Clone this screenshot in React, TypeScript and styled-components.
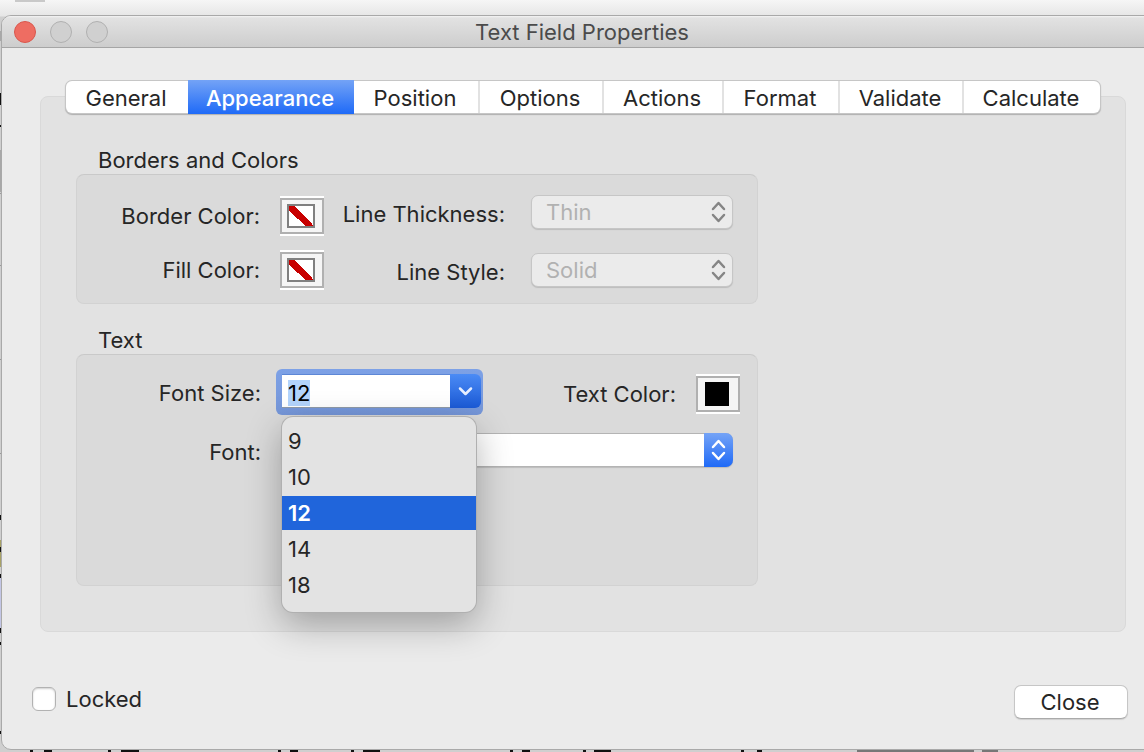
import React, { useEffect, useRef } from 'react';
import styled, { createGlobalStyle, css } from 'styled-components';

const GlobalStyle = createGlobalStyle`
  *, *::before, *::after { box-sizing: border-box; }
  html, body { margin: 0; overflow: hidden; }
  body {
    font-family: Inter, "Liberation Sans", sans-serif;
    font-size: 22px;
    line-height: 26px;
    color: #262626;
    background: #d6d6d6;
  }
  button, input, select { font: inherit; color: inherit; margin: 0; }
`;

const Desktop = styled.div`
  position: relative;
  min-height: 100vh;
  padding: 15px 0 1px 1px;
  background: linear-gradient(#f6f6f6, #e6e6e6 16px, #cfcfcf 17px);
`;

const Backdrop = styled.svg`
  position: absolute;
  inset: 0;
  width: 100%;
  height: 100%;
`;

const Window = styled.main`
  position: relative;
  width: calc(100% + 19px);
  border: 1px solid #a9a9a9;
  border-radius: 10px;
  background: #ebebeb;
  overflow: hidden;
`;

const TitleBar = styled.header`
  display: grid;
  grid-template-columns: 1fr auto 1fr;
  align-items: center;
  height: 32px;
  padding: 0 12px;
  background: linear-gradient(#f4f4f4, #e2e2e2 2px, #cdcdcd);
  border-bottom: 1px solid #a5a5a5;
`;

const Lights = styled.div`
  display: flex;
  gap: 14px;
`;

const Light = styled.button<{ $active?: boolean }>`
  width: 22px;
  height: 22px;
  padding: 0;
  border-radius: 50%;
  border: 1px solid ${(p) => (p.$active ? '#d9574d' : '#b0b0b0')};
  background: ${(p) => (p.$active ? '#ee6d62' : '#d0d0d0')};
`;

const Title = styled.h1`
  margin: 0;
  font-size: 22px;
  font-weight: 400;
  color: #4b4b4b;
`;

const Body = styled.div`
  padding: 33px 36px 53px 38px;
`;

const Tabs = styled.div`
  position: relative;
  display: grid;
  grid-template-columns: 122fr 166fr 126fr 124fr 120fr 116fr 124fr 136fr;
  height: 32px;
  margin: 0 26px -17px;
  border-radius: 6px;
  background: #fff;
  box-shadow: 0 0 0 1px #c6c6c6, 0 1px 1px 1px #b0b0b0;
`;

const Tab = styled.button<{ $selected?: boolean; $divided?: boolean }>`
  padding: 2px 2px 0 0;
  border: 0;
  border-right: ${(p) => (p.$divided ? '2px solid #e2e2e2' : '0')};
  background: transparent;
  ${(p) =>
    p.$selected &&
    css`
      margin: -1px 0;
      color: #fff;
      font-weight: 500;
      background: linear-gradient(#74a3f6, #1f6af7);
    `}
`;

const Panel = styled.div`
  padding: 50px 36px 45px 35px;
  border: 1px solid #d9d9d9;
  border-radius: 8px;
  background: #e2e2e2;
`;

const Group = styled.section`
  max-width: 682px;
  & + & { margin-top: 23px; }
`;

const GroupTitle = styled.h2`
  margin: 0 22px 1px;
  font-size: 22px;
  font-weight: 400;
`;

const GroupBox = styled.div<{ $tall?: boolean }>`
  display: flex;
  justify-content: space-between;
  min-height: ${(p) => (p.$tall ? '232px' : '130px')};
  padding: ${(p) => (p.$tall ? '19px' : '20px')} 24px 12px 20px;
  border: 1px solid #d2d2d2;
  border-top-color: #c9c9c9;
  border-radius: 8px;
  background: #dadada;
`;

const SwatchFields = styled.div`
  display: grid;
  grid-template-columns: 163px 44px;
  column-gap: 20px;
  row-gap: 14px;
  padding-top: 1px;
  align-content: start;
  align-items: center;
`;

const SelectFields = styled.div`
  display: grid;
  grid-template-columns: auto 202px;
  column-gap: 26px;
  row-gap: 24px;
  align-content: start;
`;

const TextFields = styled.div`
  flex: 1;
  display: grid;
  grid-template-columns: 164px 1fr;
  column-gap: 20px;
  row-gap: 19px;
  align-content: start;
`;

const TextRow = styled.div`
  display: flex;
  justify-content: space-between;
  height: 40px;
`;

const TextColor = styled.div`
  display: flex;
  align-items: center;
  gap: 20px;
  height: 40px;
  margin-right: -7px;
`;

const Label = styled.label<{ $drop?: boolean }>`
  text-align: right;
  white-space: nowrap;
  padding-top: ${(p) => (p.$drop ? '6px' : '0')};
`;

const SwatchFrame = styled.span`
  display: block;
  padding: 2px 0;
  background: #fff;
`;

const Swatch = styled.button`
  display: block;
  width: 44px;
  height: 36px;
  padding: 3px 5px;
  border: 2px solid #b0b0b0;
  background: #f5f5f5;
  svg { display: block; }
`;

const SelectFrame = styled.span`
  position: relative;
  display: block;
  height: 34px;
`;

const Select = styled.select<{ $live?: boolean }>`
  appearance: none;
  display: block;
  width: 100%;
  height: 34px;
  padding: 0 32px 0 14px;
  border: 1px solid ${(p) => (p.$live ? '#b4b4b4' : '#c6c6c6')};
  border-radius: 7px;
  background: ${(p) => (p.$live ? '#fff' : '#ebebeb')};
  box-shadow: 0 1px 1px #bcbcbc;
  opacity: 1;
  &:disabled { color: #b1b1b1; }
`;

const Stepper = styled.svg<{ $live?: boolean }>`
  position: absolute;
  top: 0;
  right: 0;
  width: 29px;
  height: 34px;
  border-radius: 0 7px 7px 0;
  pointer-events: none;
  color: ${(p) => (p.$live ? '#fff' : '#858585')};
  background: ${(p) => (p.$live ? 'linear-gradient(#74a3f6, #1f6af7)' : 'transparent')};
`;

const Combo = styled.div`
  position: relative;
  display: flex;
  width: 207px;
  height: 46px;
  margin: -5px 0 0 -5px;
  padding: 5px 2px 7px 6px;
  border-radius: 6px;
  background: linear-gradient(#7da1e6, #7596d8);
`;

const ComboInput = styled.input`
  flex: 1;
  min-width: 0;
  padding: 4px 6px 0;
  border: 0;
  border-top: 1px solid #5d87d6;
  border-bottom: 1px solid #8f9aa8;
  background: #fff;
  color: #000;
  outline: 0;
  &::selection { background: #b3d4fc; color: #000; }
`;

const ComboButton = styled.button`
  width: 31px;
  padding: 0;
  border: 0;
  border-radius: 0 6px 6px 0;
  color: #e6eeff;
  background: linear-gradient(#4b8bf5, #1b5ad6);
  svg { display: block; }
`;

const Options = styled.ul`
  position: absolute;
  z-index: 2;
  top: 48px;
  left: 6px;
  width: 194px;
  margin: 0;
  padding: 7px 0 10px;
  display: grid;
  row-gap: 2px;
  list-style: none;
  border-radius: 11px;
  background: #e3e3e3;
  box-shadow: 0 0 0 1px #b0b0b0, 0 12px 36px rgba(0, 0, 0, 0.3);
`;

const Option = styled.li<{ $selected?: boolean }>`
  height: 34px;
  padding: 4px 6px;
  ${(p) =>
    p.$selected &&
    css`
      color: #fff;
      font-weight: 600;
      background: #2065db;
    `}
`;

const Footer = styled.footer`
  display: flex;
  justify-content: space-between;
  align-items: flex-start;
  padding: 0 34px 30px 30px;
`;

const CheckLabel = styled.label`
  display: flex;
  align-items: center;
  gap: 10px;
  padding-top: 1px;
`;

const Check = styled.input`
  appearance: none;
  width: 24px;
  height: 24px;
  border: 1px solid #b2b2b2;
  border-radius: 6px;
  background: #fff;
  box-shadow: inset 0 1px 2px #cfcfcf;
`;

const CloseButton = styled.button`
  width: 114px;
  height: 34px;
  padding: 0 2px 0 0;
  border: 1px solid #c6c6c6;
  border-bottom-color: #aaa;
  border-radius: 7px;
  background: #fff;
  box-shadow: 0 1px 1px #cfcfcf;
`;

const tabs = ['General', 'Appearance', 'Position', 'Options', 'Actions', 'Format', 'Validate', 'Calculate'];
const sizes = ['9', '10', '12', '14', '18'];

const NoColor = () => (
  <svg width="28" height="24" viewBox="0 0 28 24" shapeRendering="crispEdges" aria-hidden="true">
    <rect x="1" y="1" width="26" height="22" fill="#fff" stroke="#808080" strokeWidth="2" />
    <path d="M2 2h5l18 18 1 2h-7L2 7z" fill="#c80000" />
  </svg>
);

const SolidColor = () => (
  <svg width="28" height="24" viewBox="0 0 28 24" aria-hidden="true">
    <rect x="2" width="24" height="24" fill="#000" />
  </svg>
);

const ColorSwatch = ({ id, name, children }: { id: string; name: string; children: React.ReactNode }) => (
  <SwatchFrame>
    <Swatch id={id} type="button" aria-label={name}>{children}</Swatch>
  </SwatchFrame>
);

const Arrows = ({ live }: { live?: boolean }) => (
  <Stepper $live={live} viewBox="0 0 29 34" fill="none" stroke="currentColor" strokeWidth="2.5" strokeLinecap="round" strokeLinejoin="round" aria-hidden="true">
    <path d="M9 14l5.500-6 5.500 6M9 20l5.500 6 5.500-6" />
  </Stepper>
);

export default function App() {
  const sizeInput = useRef<HTMLInputElement>(null);

  useEffect(() => {
    sizeInput.current?.focus();
    sizeInput.current?.select();
  }, []);

  return (
    <>
      <GlobalStyle />
      <Desktop>
        <Backdrop aria-hidden="true">
          <path d="M15 0h30v2H15z" fill="#c9c9c9" />
          <path d="M0 31h2v10H0zM0 150h2v42H0z" fill="#a8a8a8" />
          <path d="M0 193h2v1H0zM0 265h2v1H0zM0 359h2v1H0zM0 453h2v1H0z" fill="#999" />
          <path d="M0 93h2v12H0zM0 125h2v2H0zM0 515h2v5H0zM0 547h2v5H0zM0 574h2v4H0zM0 628h2v5H0zM0 642h2v3H0zM0 731h2v3H0z" fill="#111" />
          <path d="M0 578h2v50H0z" fill="#c3c6e6" />
          <path d="M0 540h2v7H0zM0 552h2v15H0z" fill="#a8a266" />
          <path d="M30 750h3v2h-3zM44 750h8v2h-8zM108 750h3v2h-3zM121 750h18v2h-18zM278 750h3v2h-3zM290 750h8v2h-8zM351 750h3v2h-3zM363 750h17v2h-17zM510 750h3v2h-3zM522 750h8v2h-8zM583 750h3v2h-3zM594 750h17v2h-17zM741 750h3v2h-3zM757 750h5v2h-5z" fill="#111" />
          <path d="M857 750h117v2H857zM982 750h16v2h-16z" fill="#777" />
        </Backdrop>
        <Window>
          <TitleBar>
            <Lights>
              <Light $active type="button" aria-label="Close window" />
              <Light type="button" aria-label="Minimize window" />
              <Light type="button" aria-label="Zoom window" />
            </Lights>
            <Title>Text Field Properties</Title>
          </TitleBar>
          <Body>
            <Tabs role="tablist">
              {tabs.map((name, i) => (
                <Tab key={name} type="button" role="tab" aria-selected={i === 1} $selected={i === 1} $divided={i > 1 && i < tabs.length - 1}>
                  {name}
                </Tab>
              ))}
            </Tabs>
            <Panel role="tabpanel">
              <Group>
                <GroupTitle>Borders and Colors</GroupTitle>
                <GroupBox>
                  <SwatchFields>
                    <Label htmlFor="border-color">Border Color:</Label>
                    <ColorSwatch id="border-color" name="Border Color"><NoColor /></ColorSwatch>
                    <Label htmlFor="fill-color">Fill Color:</Label>
                    <ColorSwatch id="fill-color" name="Fill Color"><NoColor /></ColorSwatch>
                  </SwatchFields>
                  <SelectFields>
                    <Label $drop htmlFor="thickness">Line Thickness:</Label>
                    <SelectFrame>
                      <Select id="thickness" disabled><option>Thin</option></Select>
                      <Arrows />
                    </SelectFrame>
                    <Label $drop htmlFor="line-style">Line Style:</Label>
                    <SelectFrame>
                      <Select id="line-style" disabled><option>Solid</option></Select>
                      <Arrows />
                    </SelectFrame>
                  </SelectFields>
                </GroupBox>
              </Group>
              <Group>
                <GroupTitle>Text</GroupTitle>
                <GroupBox $tall>
                  <TextFields>
                    <Label $drop htmlFor="font-size">Font Size:</Label>
                    <TextRow>
                      <Combo>
                        <ComboInput id="font-size" ref={sizeInput} defaultValue="12" role="combobox" aria-expanded="true" aria-controls="sizes" />
                        <ComboButton type="button" aria-label="Show sizes">
                          <svg width="31" height="34" viewBox="0 0 31 34" fill="none" stroke="currentColor" strokeWidth="2.5" strokeLinecap="round" strokeLinejoin="round">
                            <path d="M10 14.500l5.500 5.500 5.500-5.500" />
                          </svg>
                        </ComboButton>
                        <Options id="sizes" role="listbox">
                          {sizes.map((size) => (
                            <Option key={size} role="option" aria-selected={size === '12'} $selected={size === '12'}>{size}</Option>
                          ))}
                        </Options>
                      </Combo>
                      <TextColor>
                        <Label htmlFor="text-color">Text Color:</Label>
                        <ColorSwatch id="text-color" name="Text Color"><SolidColor /></ColorSwatch>
                      </TextColor>
                    </TextRow>
                    <Label $drop htmlFor="font">Font:</Label>
                    <SelectFrame>
                      <Select id="font" $live defaultValue=""><option value="" /></Select>
                      <Arrows live />
                    </SelectFrame>
                  </TextFields>
                </GroupBox>
              </Group>
            </Panel>
          </Body>
          <Footer>
            <CheckLabel><Check type="checkbox" />Locked</CheckLabel>
            <CloseButton type="button">Close</CloseButton>
          </Footer>
        </Window>
      </Desktop>
    </>
  );
}
